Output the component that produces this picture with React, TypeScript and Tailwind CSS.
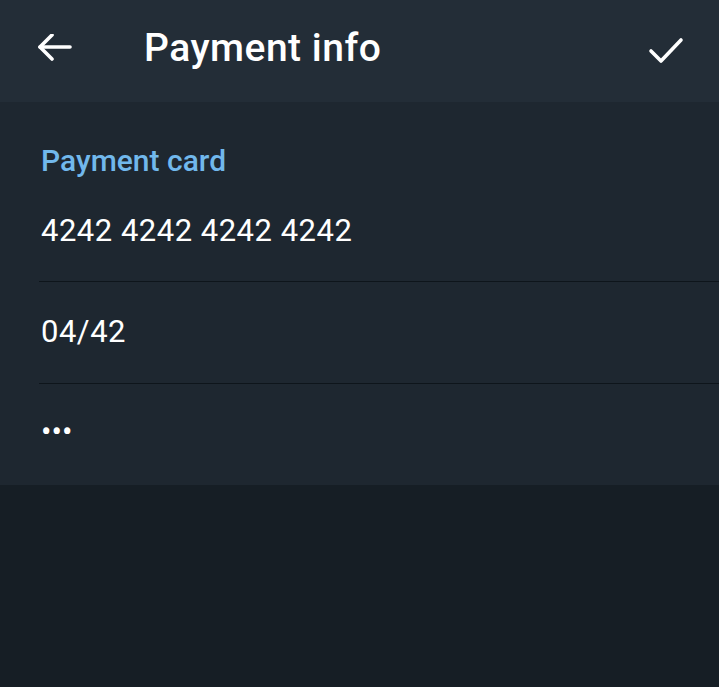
import React from "react";

export default function App() {
  return (
    <div className="w-[719px] h-[687px] bg-[#161e25] flex flex-col" style={{ fontFamily: "Roboto, 'Noto Sans', sans-serif" }}>
      <header className="h-[102px] bg-[#232d37] flex items-center shrink-0">
        <div className="w-[144px] flex items-center pl-[37px]">
          <svg width="36" height="34" viewBox="0 0 36 34" fill="none" stroke="white" strokeWidth="3.6" strokeLinecap="round" strokeLinejoin="round">
            <path d="M33 13H3" />
            <path d="M15 1L3 13l12 12" />
          </svg>
        </div>
        <h1 className="text-white text-[39px] font-medium leading-none tracking-[0.5px] flex-1 -mt-[6px]">Payment info</h1>
        <div className="pr-[34px]">
          <svg width="38" height="30" viewBox="0 0 38 30" fill="none" stroke="white" strokeWidth="3.6" strokeLinecap="round" strokeLinejoin="round">
            <path d="M4 15l10 10L34 4" />
          </svg>
        </div>
      </header>
      <section className="bg-[#1e2730] h-[383px] pt-[41px] flex flex-col">
        <div className="h-[38px] pl-[41px] flex items-center text-[#71b8ec] text-[30px] font-medium -mt-[2px] mb-[2px]">Payment card</div>
        <div className="ml-[39px] h-[101px] flex items-center pl-[2px] text-white text-[31px] tracking-[0.5px] border-b border-[#0e151b]">
          4242 4242 4242 4242
        </div>
        <div className="ml-[39px] h-[102px] flex items-center pl-[2px] text-white text-[31px] tracking-[0.5px] border-b border-[#0e151b]">
          04/42
        </div>
        <div className="ml-[39px] flex-1 flex items-center pl-[2px] text-white text-[31px] tracking-[0px] -mt-[4px]">
          •••
        </div>
      </section>
    </div>
  );
}
